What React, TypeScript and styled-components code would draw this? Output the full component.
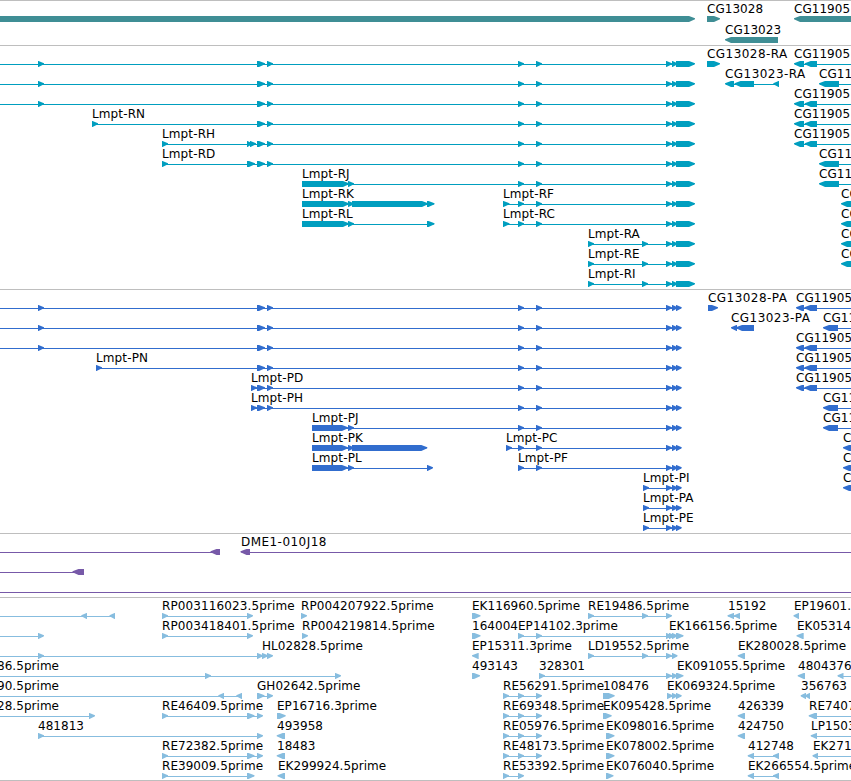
import styled, { createGlobalStyle } from "styled-components";

type Block = [number, number];

interface Feature {
  name?: string;
  labelAt?: number;
  strand: 1 | -1;
  blocks: Block[];
}

interface TrackData {
  id: string;
  color: string;
  rowHeight: number;
  padBottom: number;
  rows: Feature[][];
}

const WIDTH = 851;
// blocks that lie outside of the visible window
const OFF_LEFT: Block = [-30, -20];
const OFF_RIGHT: Block = [870, 880];

const fwd = (name: string | undefined, ...blocks: Block[]): Feature => ({
  name,
  strand: 1,
  blocks,
});

const rev = (name: string | undefined, ...blocks: Block[]): Feature => ({
  name,
  strand: -1,
  blocks,
});

const E38: Block = [38, 44];
const E257: Block = [257, 265];
const E267: Block = [267, 273];
const E518: Block = [518, 524];
const E536: Block = [536, 542];
const E642: Block = [642, 648];
const E666: Block = [666, 672];
const E672: Block = [672, 677.5];

const rnaTail: Block[] = [E666, E672, [676, 695]];
const rnaLong: Block[] = [E257, E267, E518, E536, ...rnaTail];
const rnaCG = () => rev("CG11905", [794, 804], [804.7, 817], OFF_RIGHT);
const rnaCGShort = () => rev("CG11", [819, 839], OFF_RIGHT);
const rnaCGEdge = () => rev("CG", [841, 870]);

const pepTail: Block[] = [E666, [672, 677.5], [676, 681.7]];
const pepLong: Block[] = [E257, E267, E518, E536, ...pepTail];
const pepCG = () => rev("CG11905", [796, 804], [804.3, 817], OFF_RIGHT);
const pepCGShort = () => rev("CG11", [823, 838], OFF_RIGHT);
const pepCGEdge = () => rev("C", [843, 870]);

const tracks: TrackData[] = [
  {
    id: "genes",
    color: "#3f8e95",
    rowHeight: 21,
    padBottom: 0,
    rows: [
      [
        fwd(undefined, [-30, 695]),
        fwd("CG13028", [707, 720]),
        rev("CG11905", [794, 870]),
      ],
      [rev("CG13023", [725, 778])],
    ],
  },
  {
    id: "transcripts",
    color: "#009ebf",
    rowHeight: 20,
    padBottom: 1,
    rows: [
      [
        fwd(undefined, OFF_LEFT, E38, ...rnaLong),
        fwd("CG13028-RA", [707, 720]),
        rnaCG(),
      ],
      [
        fwd(undefined, OFF_LEFT, E38, ...rnaLong),
        rev("CG13023-RA", [725, 734], [734.5, 754], [773.3, 779]),
        rnaCGShort(),
      ],
      [fwd(undefined, OFF_LEFT, E38, ...rnaLong), rnaCG()],
      [fwd("Lmpt-RN", [92, 98], ...rnaLong), rnaCG()],
      [fwd("Lmpt-RH", [162, 168], [247, 252], [250, 256], ...rnaLong), rnaCG()],
      [fwd("Lmpt-RD", [162, 168], [247, 255], ...rnaLong), rnaCGShort()],
      [
        fwd("Lmpt-RJ", [302, 349], [348, 354], E518, E536, ...rnaTail),
        rnaCGShort(),
      ],
      [
        fwd("Lmpt-RK", [302, 349], [348, 354], [352, 428], [427, 434.5]),
        fwd("Lmpt-RF", [503, 509.5], E518, E536, ...rnaTail),
        rnaCGEdge(),
      ],
      [
        fwd("Lmpt-RL", [302, 349], [348, 354], [427, 434.5]),
        fwd("Lmpt-RC", [503, 509.5], E518, E536, ...rnaTail),
        rnaCGEdge(),
      ],
      [fwd("Lmpt-RA", [588, 594], E642, ...rnaTail), rnaCGEdge()],
      [fwd("Lmpt-RE", [588, 594], E642, ...rnaTail), rnaCGEdge()],
      [fwd("Lmpt-RI", [588, 594], E642, ...rnaTail)],
    ],
  },
  {
    id: "proteins",
    color: "#316dce",
    rowHeight: 20,
    padBottom: 1,
    rows: [
      [
        fwd(undefined, OFF_LEFT, E38, ...pepLong),
        fwd("CG13028-PA", [708, 718]),
        pepCG(),
      ],
      [
        fwd(undefined, OFF_LEFT, E38, ...pepLong),
        rev("CG13023-PA", [731, 737], [736, 754]),
        pepCGShort(),
      ],
      [fwd(undefined, OFF_LEFT, E38, ...pepLong), pepCG()],
      [fwd("Lmpt-PN", [96, 102], ...pepLong), pepCG()],
      [fwd("Lmpt-PD", [251, 257], ...pepLong), pepCG()],
      [fwd("Lmpt-PH", [251, 257], ...pepLong), pepCGShort()],
      [
        fwd("Lmpt-PJ", [312, 348], [348, 354], E518, E536, ...pepTail),
        pepCGShort(),
      ],
      [
        fwd("Lmpt-PK", [312, 348], [348, 354], [352, 427.3]),
        fwd("Lmpt-PC", [506, 512], E518, E536, ...pepTail),
        pepCGEdge(),
      ],
      [
        fwd("Lmpt-PL", [312, 348], [348, 354], [427, 433]),
        fwd("Lmpt-PF", E518, E536, ...pepTail),
        pepCGEdge(),
      ],
      [fwd("Lmpt-PI", [643, 649], ...pepTail), pepCGEdge()],
      [fwd("Lmpt-PA", [643, 649], ...pepTail)],
      [fwd("Lmpt-PE", [643, 649], ...pepTail)],
    ],
  },
  {
    id: "bacs",
    color: "#7759a8",
    rowHeight: 20,
    padBottom: 1,
    rows: [
      [
        rev(undefined, OFF_LEFT, [210.5, 220]),
        rev("DME1-010J18", [240.5, 250], OFF_RIGHT),
      ],
      [rev(undefined, OFF_LEFT, [72.5, 84])],
      [rev(undefined, OFF_LEFT, OFF_RIGHT)],
    ],
  },
  {
    id: "insertions",
    color: "#87bddf",
    rowHeight: 20,
    padBottom: 0,
    rows: [
      [
        rev(undefined, OFF_LEFT, [81.3, 87], [109.5, 115]),
        fwd("RP003116023.5prime", [162, 168], [247, 253]),
        fwd("RP004207922.5prime", [301, 307]),
        fwd("EK116960.5prime", [472, 480.5]),
        fwd("RE19486.5prime", [588, 594], E642, E666),
        rev("15192", [727.5, 734], [734, 740]),
        rev("EP19601.", [793.5, 799]),
      ],
      [
        fwd(undefined, OFF_LEFT, E38),
        fwd("RP003418401.5prime", [162, 168], [247, 253]),
        fwd("RP004219814.5prime", [302, 308]),
        fwd("164004", [472, 480.5]),
        fwd("EP14102.3prime", E518, E536, E666),
        fwd("EK166156.5prime", [669, 675], E672, [676, 683.5]),
        rev("EK05314", [796.5, 803.7]),
      ],
      [
        fwd(undefined, OFF_LEFT, E38, [257, 263]),
        fwd("HL02828.5prime", [262, 268], E267),
        rev("EP15311.3prime", [472, 478.7]),
        fwd("LD19552.5prime", [588, 594], E642, E666, E672),
        rev("EK280028.5prime", [737.7, 745]),
      ],
      [
        {
          ...fwd("86.5prime", OFF_LEFT, [205, 211], [335, 341]),
          labelAt: -3,
        },
        fwd("493143", [472, 480]),
        fwd("328301", [539, 545], E666, E672),
        { ...fwd("EK091055.5prime", [676, 683.5]), labelAt: 677 },
        rev("4804376", [797.7, 805]),
        rev(undefined, [837.5, 843.5], OFF_RIGHT),
      ],
      [
        {
          ...rev("90.5prime", OFF_LEFT, [218.3, 224], [236.3, 242]),
          labelAt: -3,
        },
        fwd("GH02642.5prime", [257, 264.5], E267),
        fwd("RE56291.5prime", [503, 509], E518, E536),
        fwd("108476", [603, 614.7]),
        fwd("EK069324.5prime", [667, 673], E672, [676, 681.7]),
        rev("356763", [800.7, 806], [805, 810]),
      ],
      [
        { ...fwd("28.5prime", OFF_LEFT, [89, 95]), labelAt: -3 },
        fwd("RE46409.5prime", [162, 168], [247, 254.5], [257, 263]),
        fwd("EP16716.3prime", [277, 285.7]),
        fwd("RE69348.5prime", [503, 509], E518, E536),
        fwd("EK095428.5prime", [603, 611.7]),
        rev("426339", [737.7, 745]),
        rev("RE7407", [808.7, 817], OFF_RIGHT),
      ],
      [
        fwd("481813", E38, [257, 263]),
        rev("493958", [276.7, 285]),
        fwd("RE05976.5prime", [503, 509], E518, E536),
        fwd("EK098016.5prime", [606, 614.5]),
        rev("424750", [737.7, 745]),
        rev("LP1503", [810.7, 817], OFF_RIGHT),
      ],
      [
        fwd("RE72382.5prime", [162, 168], [247, 254.5], [257, 263]),
        rev("18483", [276.7, 285]),
        fwd("RE48173.5prime", [503, 509], E518, E536),
        fwd("EK078002.5prime", [606, 614.5]),
        rev("412748", [747.7, 754], [773, 779]),
        rev("EK271", [812.5, 818], OFF_RIGHT),
      ],
      [
        fwd("RE39009.5prime", [162, 168], [247, 254.5]),
        rev("EK299924.5prime", [277.5, 285]),
        fwd("RE53392.5prime", [503, 509], E518),
        fwd("EK076040.5prime", [606, 613.5]),
        rev("EK266554.5prime", [747.7, 754], [773, 779]),
      ],
    ],
  },
];

const GlobalStyle = createGlobalStyle`
  body {
    margin: 0;
    background: #ffffff;
  }
`;

const Browser = styled.main`
  display: flex;
  flex-direction: column;
  width: ${WIDTH}px;
  height: 781px;
  overflow: hidden;
  box-sizing: border-box;
  border-bottom: 1px solid #bebebe;
  background: #ffffff;
  font-family: "DejaVu Sans", sans-serif;
  font-size: 12px;
  line-height: 14px;
  color: #000000;
`;

const Track = styled.section<{ $padBottom: number }>`
  flex: none;
  border-top: 1px solid #bebebe;
  padding: 2px 0 ${(props) => props.$padBottom}px;
`;

const Row = styled.div<{ $height: number }>`
  position: relative;
  height: ${(props) => props.$height}px;
`;

const Glyphs = styled.svg`
  display: block;
  width: 100%;
  height: 20px;
`;

const Label = styled.span<{ $spacing: number }>`
  position: absolute;
  top: -1px;
  letter-spacing: ${(props) => props.$spacing}px;
  white-space: nowrap;
`;

// names that mix digits and a hyphen are set wider
const labelSpacing = (name: string) => {
  if (/\d/.test(name) && name.includes("-")) return 0.45;
  if (name.startsWith("RP") || name.startsWith("Lmpt")) return 0.12;
  return 0.04;
};

const arrowPoints = ([start, end]: Block, strand: 1 | -1) => {
  const head = Math.min(6.5, end - start);
  if (strand === 1) {
    const neck = end - head;
    return `${start},13 ${neck + 0.5},13 ${end},15.3 ${end},16.2 ${neck + 0.5},19 ${start},19`;
  }
  const neck = start + head;
  return `${end},13 ${neck - 0.5},13 ${start},15.3 ${start},16.2 ${neck - 0.5},19 ${end},19`;
};

const FeatureGlyph = ({ feature }: { feature: Feature }) => {
  const { blocks, strand } = feature;
  const start = blocks[0][0];
  const end = blocks[blocks.length - 1][1];
  return (
    <g>
      {blocks.length > 1 && (
        <rect x={start + 1} y={16} width={end - start - 2} height={1} />
      )}
      {blocks.map((block) => (
        <polygon key={block[0]} points={arrowPoints(block, strand)} />
      ))}
    </g>
  );
};

const App = () => {
  return (
    <>
      <GlobalStyle />
      <Browser>
        {tracks.map((track) => (
          <Track key={track.id} $padBottom={track.padBottom}>
            {track.rows.map((features, i) => (
              <Row key={i} $height={track.rowHeight}>
                <Glyphs fill={track.color}>
                  {features.map((feature, j) => (
                    <FeatureGlyph key={j} feature={feature} />
                  ))}
                </Glyphs>
                {features.map(
                  (feature, j) =>
                    feature.name && (
                      <Label
                        key={j}
                        $spacing={labelSpacing(feature.name)}
                        style={{
                          left: feature.labelAt ?? Math.ceil(feature.blocks[0][0]),
                        }}
                      >
                        {feature.name}
                      </Label>
                    )
                )}
              </Row>
            ))}
          </Track>
        ))}
      </Browser>
    </>
  );
};

export default App;
